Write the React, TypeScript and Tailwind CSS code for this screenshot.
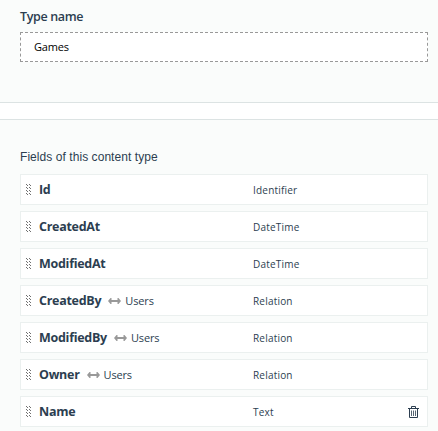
const fields: { name: string; type: string; related?: string; removable?: boolean }[] = [
  { name: "Id", type: "Identifier" },
  { name: "CreatedAt", type: "DateTime" },
  { name: "ModifiedAt", type: "DateTime" },
  { name: "CreatedBy", type: "Relation", related: "Users" },
  { name: "ModifiedBy", type: "Relation", related: "Users" },
  { name: "Owner", type: "Relation", related: "Users" },
  { name: "Name", type: "Text", removable: true },
];

function Grip() {
  return (
    <svg width="5" height="11" viewBox="0 0 5 11" shapeRendering="crispEdges" className="shrink-0 fill-[#707070]">
      {[0, 3, 6, 9].map((y) => (
        <path key={y} d={`M0 ${y}h1v1h1v1h-1v-1h-1zM3 ${y}h1v1h1v1h-1v-1h-1z`} />
      ))}
    </svg>
  );
}

function Arrow() {
  return (
    <svg width="13" height="6" viewBox="0 0 13 6" className="shrink-0 fill-[#999]">
      <path d="M0 3 2.500 0H3.500V2H9.500V0h1L13 3l-2.500 3h-1V4H3.500V6h-1z" />
    </svg>
  );
}

function Trash() {
  return (
    <svg width="11" height="12" viewBox="0 0 11 12" fill="none" stroke="#2c3e50" className="shrink-0">
      <path d="M0 2.500h11M3.500 2V.5h4V2M1.500 3v8.500h8V3" />
      <path d="M3.500 4.500V10M5.500 4.500V10M7.500 4.500V10" strokeOpacity=".8" />
    </svg>
  );
}

export default function App() {
  return (
    <div className="h-[431px] overflow-hidden bg-white font-['Open_Sans',sans-serif] text-[#2c3e50]">
      <section className="h-[103px] border-b border-[#dce3e3] bg-[#fafcfb] pt-2 pr-2.5 pl-5">
        <label htmlFor="type-name" className="block h-6 text-[12.5px] leading-[18px] font-semibold tracking-[-0.35px]">Type name</label>
        <input
          id="type-name"
          defaultValue="Games"
          className="block h-[30px] w-full border border-dashed border-[#999] bg-white px-[13px] pb-0.5 text-[11px] tracking-[-0.15px] text-black outline-none"
        />
      </section>
      <section className="mt-4 h-[312px] border-t border-[#dce3e3] bg-[#fafcfb] pt-[29px] pr-2.5 pl-5">
        <h2 className="h-[25px] font-['Liberation_Sans',sans-serif] text-[12px] leading-4 tracking-[0.06px]">Fields of this content type</h2>
        <ul className="flex flex-col gap-1.5">
          {fields.map((f) => (
            <li key={f.name} className="flex h-[31px] items-center border border-[#ebf0ef] bg-white pr-2 pl-[5px]">
              <Grip />
              <div className="ml-2 flex w-[214px] items-center">
                <span className="pt-px text-[12.5px] leading-4 font-bold tracking-[-0.28px]">{f.name}</span>
                {f.related && (
                  <span className="ml-[7px] flex items-center gap-1 text-[11px] leading-4 tracking-[-0.15px]">
                    <Arrow />
                    {f.related}
                  </span>
                )}
              </div>
              <span className="text-[10px] leading-4 tracking-[0.2px]">{f.type}</span>
              {f.removable && (
                <button aria-label="Delete field" className="ml-auto">
                  <Trash />
                </button>
              )}
            </li>
          ))}
        </ul>
      </section>
    </div>
  );
}
